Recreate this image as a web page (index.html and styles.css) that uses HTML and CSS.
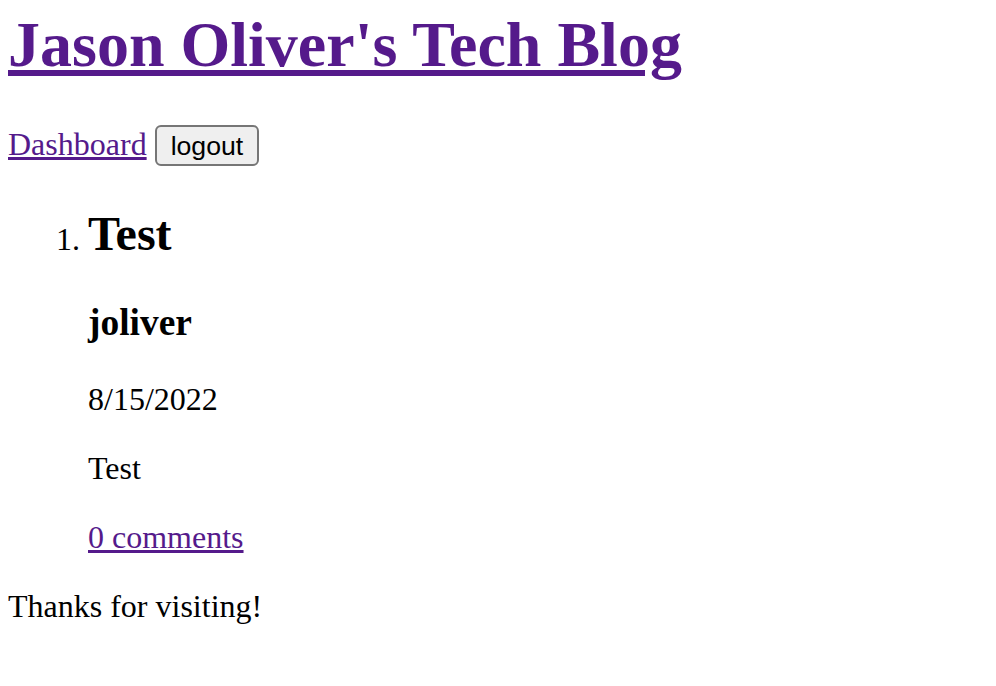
FILE: index.html
```html
<!DOCTYPE html>
<html>
<head>
<meta charset="utf-8">
<title>Jason Oliver's Tech Blog</title>
<link rel="stylesheet" href="styles.css">
</head>
<body>
<header class="site-header">
  <h1 class="site-title"><a href="#" class="link">Jason Oliver's Tech Blog</a></h1>
  <nav class="nav">
    <a href="#" class="link">Dashboard</a>
    <button class="btn">logout</button>
  </nav>
</header>
<main>
  <ol class="posts">
    <li class="post">
      <h2 class="post-title">Test</h2>
      <h3 class="post-author">joliver</h3>
      <p class="para">8/15/2022</p>
      <p class="para">Test</p>
      <p class="para"><a href="#" class="link">0 comments</a></p>
    </li>
  </ol>
</main>
<footer>
  <p class="para">Thanks for visiting!</p>
</footer>
</body>
</html>
```
FILE: styles.css
```css
html {
  background: #fff;
}
body {
  margin: 8px;
  font-family: "Liberation Serif", "Times New Roman", serif;
  font-size: 32px;
  color: #000;
}
.link {
  color: #551a8b;
}
.site-title {
  font-size: 64px;
  margin: 0 0 42.88px 0;
}
.nav {
  display: block;
}
.btn {
  font-family: "Liberation Sans", Arial, sans-serif;
  font-size: 26.67px;
  color: #000;
  background: #efefef;
  border: 2px solid #767676;
  border-radius: 6px;
  padding: 4px 14px 2px 14px;
  margin: 0;
  vertical-align: baseline;
}
.posts {
  margin: 32px 0;
  padding-left: 80px;
}
.post-title {
  font-size: 48px;
  margin: 39.84px 0;
}
.post-author {
  font-size: 37.44px;
  margin: 37.44px 0;
}
.para {
  margin: 32px 0;
}
```
